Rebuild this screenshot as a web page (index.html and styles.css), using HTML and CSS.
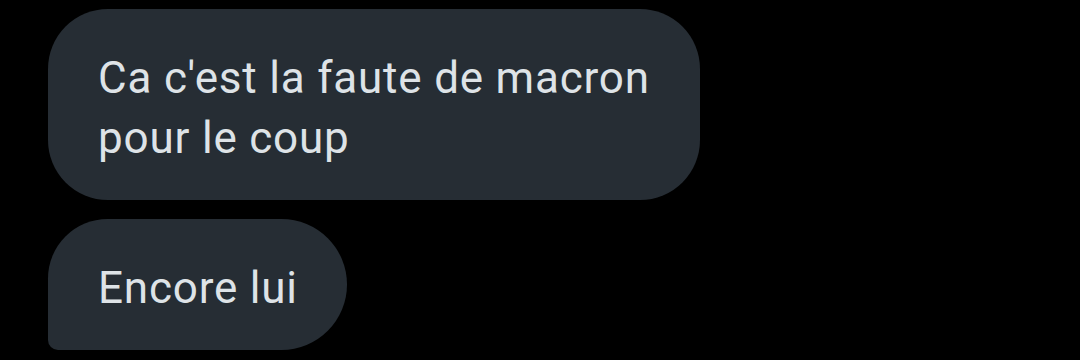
FILE: index.html
```html
<!DOCTYPE html>
<html lang="fr">
<head>
    <meta charset="UTF-8">
    <meta name="viewport" content="width=device-width, initial-scale=1.0">
    <title>Conversation</title>
    <link rel="stylesheet" href="styles.css">
</head>
<body>
    <!-- Messages reçus -->
    <div class="thread">
        <div class="bubble bubble-first">Ca c'est la faute de macron pour le coup</div>
        <div class="bubble bubble-last">Encore lui</div>
    </div>
</body>
</html>
```

FILE: styles.css
```css
body {
    margin: 0;
    padding: 0;
    background-color: #000;
    font-family: Roboto, "Noto Sans", Arial, sans-serif;
}
.thread {
    display: flex;
    flex-direction: column;
    align-items: flex-start;
    gap: 19px;
    padding: 9px 0 0 48px;
}
.bubble {
    box-sizing: border-box;
    padding: 39px 49px 32px 50px;
    background-color: #262d34;
    color: #dee3e7;
    font-size: 44px;
    line-height: 60px;
    letter-spacing: 0.8px;
}
.bubble-first {
    max-width: 652px;
    border-radius: 60px;
}
.bubble-last {
    border-radius: 60px 66px 66px 10px;
}
```
